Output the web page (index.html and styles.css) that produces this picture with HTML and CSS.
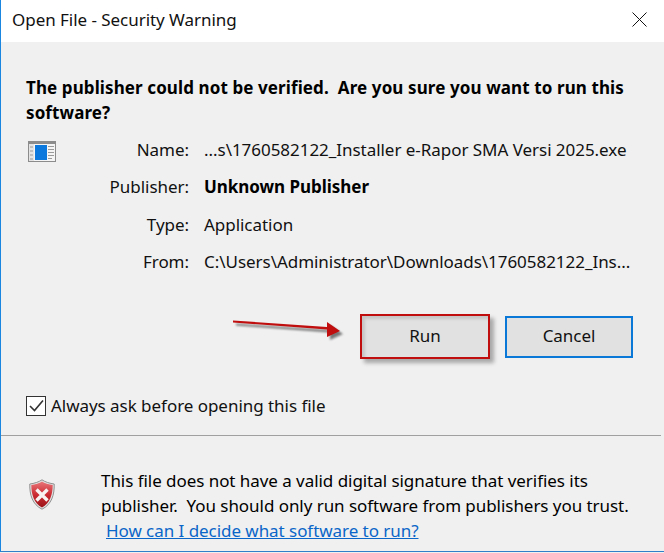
FILE: index.html
```html
<!DOCTYPE html>
<html lang="en">
<head>
<meta charset="utf-8">
<title>Open File - Security Warning</title>
<link rel="stylesheet" href="styles.css">
</head>
<body>
<div class="window">
  <header class="titlebar">
    <span class="title">Open File - Security Warning</span>
    <svg class="close" width="15" height="15" viewBox="0 0 15 15"><path d="M0.500 0.500L14.500 14.500M14.500 0.500L0.500 14.500" stroke="#111" stroke-width="1" fill="none"/></svg>
  </header>
  <main class="content">
    <h1 class="headline">The publisher could not be verified.&nbsp; Are you sure you want to run this software?</h1>
    <div class="details">
      <svg class="app-icon" width="28" height="21" viewBox="0 0 28 21">
        <rect x="0.5" y="0.5" width="27" height="20" fill="#f5f5f5" stroke="#8c8c8c"/>
        <rect x="1" y="1" width="26" height="2" fill="#8c8c8c"/>
        <rect x="1" y="3" width="5" height="17" fill="#e4e4e4"/>
        <rect x="7" y="4" width="12" height="15" fill="#0a78dc"/>
        <path d="M2 6h3M2 10h3M2 14h3M2 18h3" stroke="#9a9a9a"/>
        <path d="M20 5.500h6M20 8.500h6M20 11.500h6M20 14.500h6M20 17.500h4" stroke="#9a9a9a"/>
      </svg>
      <dl class="fields">
        <dt>Name:</dt><dd>...s\1760582122_Installer e-Rapor SMA Versi 2025.exe</dd>
        <dt>Publisher:</dt><dd class="strong">Unknown Publisher</dd>
        <dt>Type:</dt><dd>Application</dd>
        <dt>From:</dt><dd>C:\Users\Administrator\Downloads\1760582122_Ins...</dd>
      </dl>
    </div>
    <div class="actions">
      <svg class="arrow" width="118" height="32" viewBox="0 0 118 32">
        <defs><filter id="soft" x="-10%" y="-30%" width="120%" height="160%"><feGaussianBlur stdDeviation="1.200"/></filter></defs>
        <path d="M0 4.500L94 11L94 6L107 15L94 21L94 13.500L0 6.500Z" fill="#000" opacity=".5" filter="url(#soft)" transform="translate(3 3)"/>
        <path d="M0 4.500L94 11L94 6L107 15L94 21L94 13.500L0 6.500Z" fill="#c00d0d"/>
      </svg>
      <button class="btn btn-run" type="button">Run</button>
      <button class="btn btn-cancel" type="button">Cancel</button>
    </div>
    <label class="always">
      <span class="box"><svg width="15" height="13" viewBox="0 0 15 13"><path d="M1 7L5.500 11.500L14 1.500" stroke="#333" stroke-width="1.600" fill="none"/></svg></span>
      <span>Always ask before opening this file</span>
    </label>
  </main>
  <footer class="warning">
    <svg class="shield" width="26" height="31" viewBox="0 0 26 31">
      <defs>
        <linearGradient id="shieldFill" x1="0" y1="0" x2="0" y2="1">
          <stop offset="0" stop-color="#e8767a"/><stop offset="0.500" stop-color="#cc2c33"/><stop offset="1" stop-color="#9a1318"/>
        </linearGradient>
      </defs>
      <path d="M13 0.800C10 3 5 4.500 0.800 5C0.500 16 3.500 25.500 13 30.200C22.500 25.500 25.500 16 25.200 5C21 4.500 16 3 13 0.800Z" fill="#e4e4e4" stroke="#8f8f8f" stroke-width="1"/>
      <path d="M13 2.500C10.500 4.300 6 5.600 2.300 6C2.300 15.500 5 24 13 28.500C21 24 23.700 15.500 23.700 6C20 5.600 15.500 4.300 13 2.500Z" fill="url(#shieldFill)"/>
      <path d="M7.500 10.500L18.500 21.500M18.500 10.500L7.500 21.500" stroke="#f8f2f2" stroke-width="3.400" fill="none"/>
    </svg>
    <div class="warning-text">
      <p>This file does not have a valid digital signature that verifies its publisher.&nbsp; You should only run software from publishers you trust.</p>
      <a class="help" href="#">How can I decide what software to run?</a>
    </div>
  </footer>
</div>
</body>
</html>
```
FILE: styles.css
```css
* { box-sizing: border-box; }
html, body { margin: 0; padding: 0; }
body {
  width: 664px;
  height: 553px;
  overflow: hidden;
  background: #f0f0f0;
  font-family: "Noto Sans", "Open Sans", sans-serif;
  font-size: 17px;
  letter-spacing: -0.04px;
  color: #000;
}
.window {
  height: 552px;
  display: flex;
  flex-direction: column;
  border-left: 1px solid #1a86e0;
  border-bottom: 1px solid #2f7fc8;
  background: #f0f0f0;
}
.titlebar {
  height: 42px;
  flex: none;
  background: #fff;
  display: flex;
  align-items: center;
  justify-content: space-between;
  padding: 0 17px 3px 11px;
}
.title { color: #111; }
.close { flex: none; }
.content { flex: 1; padding: 33px 31px 0 25px; display: flex; flex-direction: column; }
.headline { margin: 0; font-size: 17px; line-height: 25px; font-weight: 700; letter-spacing: 0.1px; }
.details { display: flex; margin-top: 16px; }
.app-icon { flex: none; margin-left: 2px; }
.fields {
  margin: -10.5px 0 0 0;
  display: grid;
  grid-template-columns: 133px 1fr;
  column-gap: 15px;
  grid-auto-rows: 37.5px;
  align-items: center;
}
.fields dt { text-align: right; color: #111; }
.fields dd { margin: 0; white-space: nowrap; color: #111; }
.fields dd.strong { font-weight: 700; color: #000; }
.actions { display: flex; justify-content: flex-end; align-items: center; gap: 15px; margin-top: 33.5px; position: relative; height: 45px; }
.arrow { position: absolute; left: 207px; top: 2px; }
.btn {
  font: inherit;
  letter-spacing: inherit;
  color: #111;
  background: #e1e1e1;
  width: 128px;
  height: 42px;
  padding: 0 0 3px;
}
.btn-run { border: 2px solid #c00d0d; width: 130px; height: 45px; box-shadow: 4px 4px 4px rgba(0,0,0,.3), inset 3px 3px 3px rgba(0,0,0,.12); }
.btn-cancel { border: 2px solid #0a78d7; }
.always { display: flex; align-items: center; gap: 5px; margin-top: 35px; color: #111; }
.box { width: 20px; height: 20px; background: #fff; border: 1px solid #333; display: flex; align-items: center; justify-content: center; }
.warning {
  height: 116px;
  flex: none;
  border-top: 1px solid #a0a0a0;
  margin-right: 3px;
  display: flex;
  padding: 0 0 0 28px;
}
.shield { flex: none; margin-top: 43px; }
.warning-text { margin: 32px 0 0 46px; line-height: 25px; letter-spacing: -0.05px; }
.warning-text p { margin: 0; }
.help { display: inline-block; margin-left: 5px; color: #0a66c8; text-decoration: underline; }
```
